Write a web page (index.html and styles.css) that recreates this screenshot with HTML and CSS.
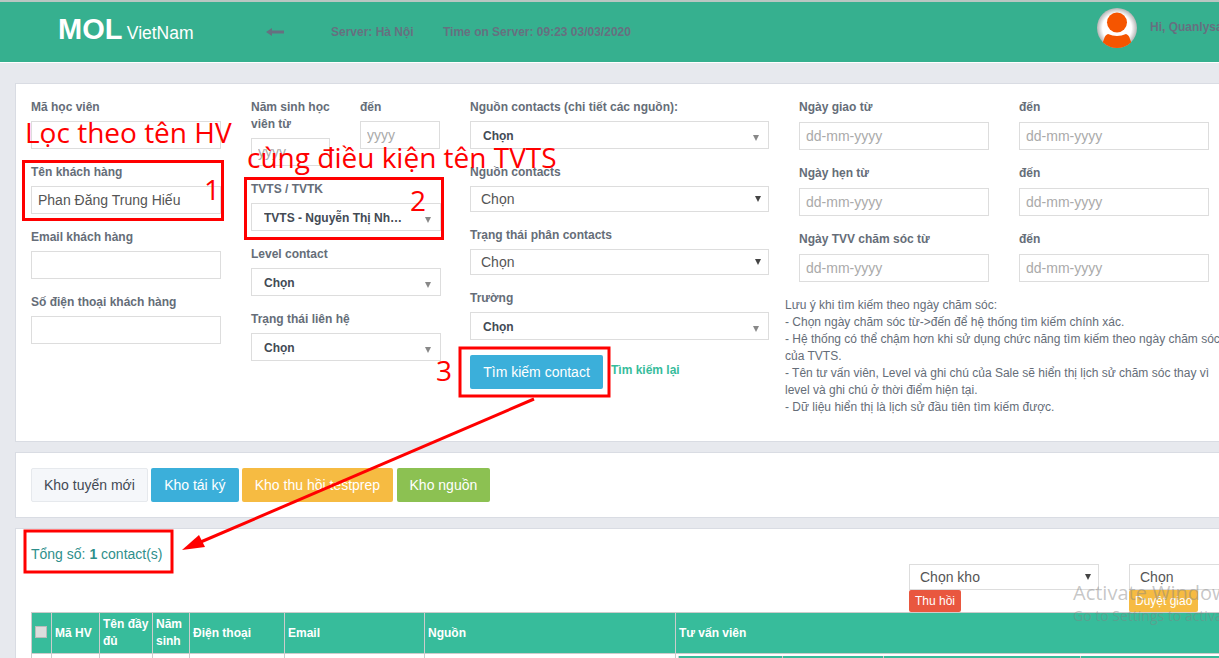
FILE: index.html
```html
<!DOCTYPE html>
<html>
	<head>
		<meta charset="utf-8">
		<title>MOL VietNam</title>
		<link rel="stylesheet" href="styles.css">
	</head>
	<body>
		<div class="page">
			<header class="topbar">
				<div class="logo"><b>MOL</b> <span>VietNam</span></div>
				<div class="back">
					<svg width="18" height="10" viewBox="0 0 18 10"><path d="M0 5 L6 1 L6 3.5 L18 3.5 L18 6.5 L6 6.5 L6 9 Z"/></svg>
				</div>
				<div class="server">Server: Hà Nội</div>
				<div class="time">Time on Server: 09:23 03/03/2020</div>
				<div class="user">
					<svg class="avatar" width="40" height="40" viewBox="0 0 40 40">
						<defs>
							<radialGradient id="avbg"><stop offset="72%" stop-color="#fff"/><stop offset="100%" stop-color="#b5b5b5"/></radialGradient>
							<clipPath id="avclip"><circle cx="20" cy="20" r="20"/></clipPath>
						</defs>
						<circle cx="20" cy="20" r="20" fill="url(#avbg)"/>
						<g clip-path="url(#avclip)" fill="#f55500">
							<circle cx="20" cy="14.5" r="10"/>
							<path d="M11 26 Q20 30 29 26 Q32 27 33 31 L37 42 L3 42 L7 31 Q8 27 11 26 Z"/>
						</g>
					</svg>
					<span class="hi">Hi, Quanlysale</span>
				</div>
			</header>

			<section class="panel filters">
				<div class="col">
					<div class="field"><label>Mã học viên</label><input class="box" type="text"></div>
					<div class="field"><label>Tên khách hàng</label><input class="box" type="text" value="Phan Đăng Trung Hiếu"></div>
					<div class="field"><label>Email khách hàng</label><input class="box" type="text"></div>
					<div class="field"><label>Số điện thoại khách hàng</label><input class="box" type="text"></div>
				</div>
				<div class="col">
					<div class="years">
						<div class="field"><label>Năm sinh học viên từ</label><input class="box" type="text" placeholder="yyyy"></div>
						<div class="field"><label>đến</label><input class="box" type="text" placeholder="yyyy"></div>
					</div>
					<div class="field"><label>TVTS / TVTK</label><div class="pick"><span class="pick-text">TVTS - Nguyễn Thị Nhung</span><i class="caret"></i></div></div>
					<div class="field"><label>Level contact</label><div class="pick"><span class="pick-text">Chọn</span><i class="caret"></i></div></div>
					<div class="field"><label>Trạng thái liên hệ</label><div class="pick"><span class="pick-text">Chọn</span><i class="caret"></i></div></div>
				</div>
				<div class="col col-mid">
					<div class="field"><label>Nguồn contacts (chi tiết các nguồn):</label><div class="pick"><span class="pick-text">Chọn</span><i class="caret"></i></div></div>
					<div class="field"><label>Nguồn contacts</label><div class="native"><span>Chọn</span><i class="caret dark"></i></div></div>
					<div class="field"><label>Trạng thái phân contacts</label><div class="native"><span>Chọn</span><i class="caret dark"></i></div></div>
					<div class="field"><label>Trường</label><div class="pick"><span class="pick-text">Chọn</span><i class="caret"></i></div></div>
					<div class="search-row">
						<button class="btn btn-blue search-btn">Tìm kiếm contact</button>
						<a class="reset">Tìm kiếm lại</a>
					</div>
				</div>
				<div class="col-wide">
					<div class="dates">
						<div class="field date"><label>Ngày giao từ</label><input class="box" type="text" placeholder="dd-mm-yyyy"></div>
						<div class="field date"><label>đến</label><input class="box" type="text" placeholder="dd-mm-yyyy"></div>
						<div class="field date"><label>Ngày hẹn từ</label><input class="box" type="text" placeholder="dd-mm-yyyy"></div>
						<div class="field date"><label>đến</label><input class="box" type="text" placeholder="dd-mm-yyyy"></div>
						<div class="field date"><label>Ngày TVV chăm sóc từ</label><input class="box" type="text" placeholder="dd-mm-yyyy"></div>
						<div class="field date"><label>đến</label><input class="box" type="text" placeholder="dd-mm-yyyy"></div>
					</div>
					<p class="notes">Lưu ý khi tìm kiếm theo ngày chăm sóc:<br>
					- Chọn ngày chăm sóc từ-&gt;đến để hệ thống tìm kiếm chính xác.<br>
					- Hệ thống có thể chậm hơn khi sử dụng chức năng tìm kiếm theo ngày chăm sóc của TVTS.<br>
					- Tên tư vấn viên, Level và ghi chú của Sale sẽ hiển thị lịch sử chăm sóc thay vì level và ghi chú ở thời điểm hiện tại.<br>
					- Dữ liệu hiển thị là lịch sử đầu tiên tìm kiếm được.</p>
				</div>
			</section>

			<section class="panel stores">
				<button class="btn btn-light">Kho tuyển mới</button>
				<button class="btn btn-blue">Kho tái ký</button>
				<button class="btn btn-amber">Kho thu hồi testprep</button>
				<button class="btn btn-green">Kho nguồn</button>
			</section>

			<section class="panel results">
				<div class="total">Tổng số: <b>1</b> contact(s)</div>
				<div class="actions">
					<div class="action">
						<div class="native"><span>Chọn kho</span><i class="caret dark"></i></div>
						<button class="mini mini-red">Thu hồi</button>
					</div>
					<div class="action">
						<div class="native"><span>Chọn</span><i class="caret dark"></i></div>
						<button class="mini mini-amber">Duyệt giao</button>
					</div>
				</div>
				<table class="grid">
					<colgroup>
						<col class="c-check"><col class="c-id"><col class="c-name"><col class="c-year"><col class="c-phone"><col class="c-mail"><col class="c-src"><col class="c-adv">
					</colgroup>
					<thead>
						<tr>
							<th><input class="check" type="checkbox"></th>
							<th>Mã HV</th>
							<th>Tên đầy đủ</th>
							<th>Năm sinh</th>
							<th>Điện thoại</th>
							<th>Email</th>
							<th>Nguồn</th>
							<th>Tư vấn viên</th>
						</tr>
					</thead>
					<tbody>
						<tr>
							<td></td><td></td><td></td><td></td><td></td><td></td><td></td>
							<td class="inner-cell">
								<table class="inner">
									<tr><th class="i1"></th><th class="i2"></th><th class="i3"></th><th></th></tr>
								</table>
							</td>
						</tr>
					</tbody>
				</table>
			</section>
		</div>

		<!-- annotations drawn over the screenshot -->
		<svg class="marks" width="1219" height="658">
			<rect x="23.5" y="161.5" width="199" height="58"/>
			<rect x="245.5" y="178.5" width="197" height="60"/>
			<rect x="460" y="348" width="149" height="48"/>
			<rect x="25" y="531" width="147" height="41"/>
			<line x1="534" y1="399" x2="196" y2="544"/>
			<polygon points="182,550 199,535 205,547"/>
		</svg>
		<div class="note note-a">Lọc theo tên HV</div>
		<div class="note note-b">cùng điều kiện tên TVTS</div>
		<div class="note num-1">1</div>
		<div class="note num-2">2</div>
		<div class="note num-3">3</div>

		<div class="activate">
			<div class="activate-big">Activate Windows</div>
			<div class="activate-small">Go to Settings to activate Windows.</div>
		</div>
	</body>
</html>
```

FILE: styles.css
```css
html, body
{
	margin : 0;
	width : 1219px;
	height : 658px;
	overflow : hidden;
}
body
{
	position : relative;
	background-color : #e7e9ee;
	font-family : "Liberation Sans", Arial, sans-serif;
	font-size : 12px;
	color : #656d78;
}
.page
{
	width : 1300px;
}

/* top bar */
.topbar
{
	display : flex;
	align-items : center;
	height : 60px;
	padding-left : 58px;
	background-color : #36b08f;
	border-top : 2px solid #b9c6c2;
	border-bottom : 1px solid #fff;
	font-weight : bold;
	color : #667080;
}
.logo
{
	width : 208px;
	margin-top : -6px;
	color : #fff;
	font-weight : normal;
	white-space : nowrap;
}
.logo b
{
	font-size : 29px;
}
.logo span
{
	margin-left : 1px;
	font-size : 17.5px;
}
.back
{
	width : 65px;
	height : 10px;
	line-height : 10px;
}
.back svg
{
	display : block;
	fill : #667080;
}
.server
{
	width : 112px;
}
.time
{
	width : 654px;
}
.user
{
	display : flex;
	align-items : center;
	gap : 13px;
	margin-top : -8px;
	white-space : nowrap;
}
.hi
{
	margin-top : -2px;
}

/* panels */
.panel
{
	margin-left : 15px;
	background-color : #fff;
	border : 1px solid #d9dce3;
}
.filters
{
	display : grid;
	grid-template-columns : 190px 190px 299px 410px;
	column-gap : 30px;
	height : 343px;
	margin-top : 20px;
	padding : 14px 15px 0;
}
.col-mid
{
	margin : 0 1px 0 -1px;
}
.col-wide
{
	margin-left : -1px;
}
.field
{
	margin-bottom : 14px;
}
.field label
{
	display : block;
	position : relative;
	top : 1px;
	margin-bottom : 6px;
	font-weight : bold;
	line-height : 17px;
}
.box
{
	display : block;
	box-sizing : border-box;
	width : 100%;
	height : 28px;
	padding : 0 6px;
	border : 1px solid #ddd;
	background-color : #fff;
	font-family : inherit;
	font-size : 14px;
	color : #555;
}
.box::placeholder
{
	color : #aaa;
	opacity : 1;
}
.years
{
	display : grid;
	grid-template-columns : 79px 80px;
	column-gap : 30px;
}
.pick, .native
{
	position : relative;
	box-sizing : border-box;
	border : 1px solid #ddd;
	background-color : #fff;
	white-space : nowrap;
}
.pick
{
	height : 28px;
	padding : 0 36px 0 12px;
	line-height : 28px;
	font-weight : bold;
	color : #434a54;
}
.pick-text
{
	display : block;
	overflow : hidden;
	text-overflow : ellipsis;
}
.native
{
	height : 26px;
	padding-left : 10px;
	line-height : 24px;
	font-size : 14px;
	color : #555;
}
.caret
{
	position : absolute;
	top : 13px;
	right : 9px;
	border-style : solid;
	border-width : 6px 3.5px 0;
	border-color : #888 transparent transparent;
}
.caret.dark
{
	top : 9px;
	right : 7px;
	border-top-color : #444;
}
.search-row
{
	display : flex;
	align-items : center;
	gap : 8px;
	margin-top : 15px;
}
.reset
{
	margin-top : -5px;
	font-weight : bold;
	color : #37bc9b;
}
.dates
{
	display : grid;
	grid-template-columns : 190px 190px;
	column-gap : 30px;
}
.field.date label
{
	margin-bottom : 7px;
}
.notes
{
	width : 436px;
	margin : 1px 0 0 -14px;
	line-height : 17px;
}

/* buttons */
.btn
{
	height : 34px;
	padding : 0 12px;
	border : 1px solid transparent;
	border-radius : 2px;
	font-family : inherit;
	font-size : 14px;
	color : #fff;
}
.btn-light
{
	background-color : #f5f7fa;
	border-color : #e6e9ed;
	color : #434a54;
}
.btn-blue
{
	background-color : #3bafda;
}
.btn-amber
{
	background-color : #f6bb42;
}
.btn-green
{
	background-color : #8cc152;
}
.search-btn
{
	width : 133px;
	padding : 0;
}
.stores
{
	display : flex;
	gap : 3px;
	height : 34px;
	margin-top : 10px;
	padding : 15px;
}
.stores .btn-blue
{
	width : 88px;
}
.stores .btn-amber
{
	width : 151px;
	margin-right : 1px;
	padding : 0;
}
.stores .btn-green
{
	width : 93px;
	padding : 0;
}

/* results */
.results
{
	height : 200px;
	margin-top : 10px;
	padding : 15px 15px 0;
}
.total
{
	font-size : 14px;
	line-height : 20px;
	color : #2e8f8b;
}
.actions
{
	display : flex;
	gap : 30px;
	padding-left : 878px;
}
.action
{
	flex : none;
	width : 190px;
}
.mini
{
	display : block;
	height : 22px;
	padding : 0 6px;
	border : 0;
	border-radius : 2px;
	font-family : inherit;
	font-size : 12px;
	color : #fff;
}
.mini-red
{
	background-color : #e9573f;
}
.mini-amber
{
	background-color : #f6bb42;
}
.grid
{
	table-layout : fixed;
	width : 1240px;
	border-collapse : collapse;
}
.c-check { width : 20px; }
.c-id { width : 48px; }
.c-name { width : 53px; }
.c-year { width : 37px; }
.c-phone { width : 95px; }
.c-mail { width : 140px; }
.c-src { width : 251px; }
.grid th, .grid td
{
	padding : 3px;
	border : 1px solid #ccc;
	text-align : left;
	line-height : 17px;
}
.grid > thead th
{
	background-color : #37bc9b;
	font-weight : bold;
	color : #fff;
}
.check
{
	appearance : none;
	display : block;
	width : 12px;
	height : 12px;
	margin : -1px 0 1px 0;
	background-color : #ddd;
	border : 1px solid #bbb;
}
.grid .inner-cell
{
	padding : 2px 3px 3px 2px;
}
.inner
{
	table-layout : fixed;
	width : 100%;
	border-collapse : collapse;
}
.inner .i1 { width : 97px; }
.inner .i2 { width : 94px; }
.inner .i3 { width : 190px; }
.grid .inner th
{
	height : 24px;
	border-width : 0 1px;
	background-color : #37bc9b;
}

/* red annotations */
.marks
{
	position : absolute;
	top : 0;
	left : 0;
}
.marks rect
{
	fill : none;
	stroke : #f00;
	stroke-width : 3;
}
.marks line
{
	stroke : #f00;
	stroke-width : 3;
}
.marks polygon
{
	fill : #f00;
}
.note
{
	position : absolute;
	font-family : "Open Sans", sans-serif;
	font-size : 28px;
	line-height : 34px;
	color : #f00;
	white-space : nowrap;
}
.note-a
{
	top : 115px;
	left : 25px;
}
.note-b
{
	top : 140px;
	left : 247px;
}
.num-1
{
	top : 172px;
	left : 204px;
}
.num-2
{
	top : 183px;
	left : 410px;
}
.num-3
{
	top : 353px;
	left : 436px;
}

/* windows watermark */
.activate
{
	position : absolute;
	top : 580px;
	left : 1073px;
	font-family : "Open Sans", sans-serif;
	color : rgba(130, 130, 130, .45);
	white-space : nowrap;
}
.activate-big
{
	font-size : 20px;
	line-height : 26px;
}
.activate-small
{
	font-size : 14px;
	line-height : 20px;
}
```
